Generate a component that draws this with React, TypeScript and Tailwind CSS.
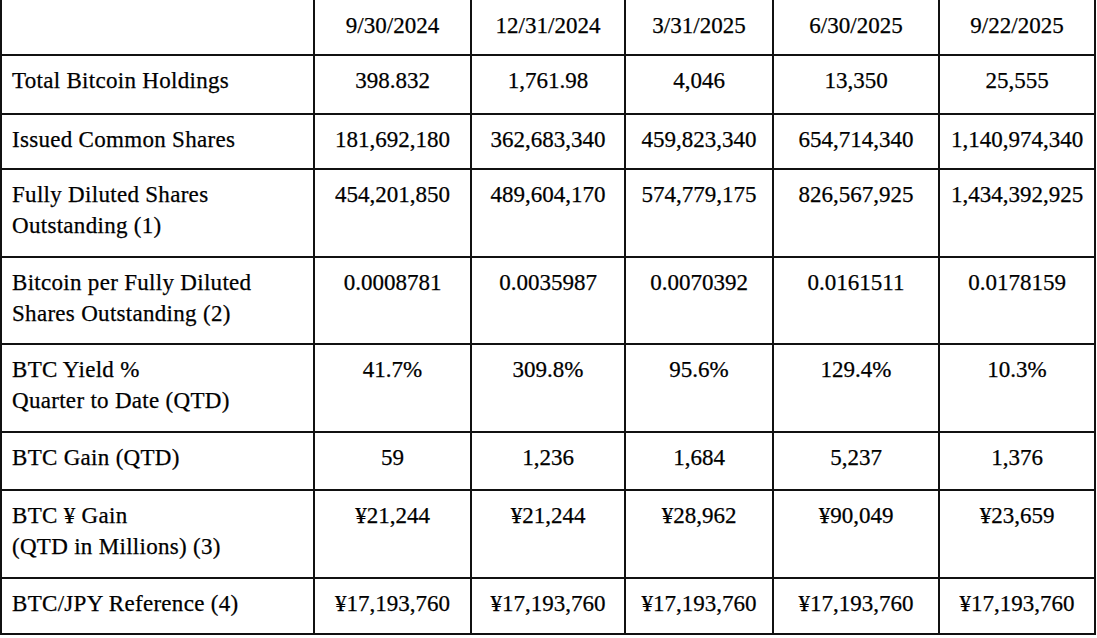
const dates = ['9/30/2024', '12/31/2024', '3/31/2025', '6/30/2025', '9/22/2025'];

const rows: { label: string[]; values: string[]; h: string }[] = [
    { label: ['Total Bitcoin Holdings'], values: ['398.832', '1,761.98', '4,046', '13,350', '25,555'], h: 'h-[59px]' },
    { label: ['Issued Common Shares'], values: ['181,692,180', '362,683,340', '459,823,340', '654,714,340', '1,140,974,340'], h: 'h-[55px]' },
    { label: ['Fully Diluted Shares', 'Outstanding (1)'], values: ['454,201,850', '489,604,170', '574,779,175', '826,567,925', '1,434,392,925'], h: 'h-[88px]' },
    { label: ['Bitcoin per Fully Diluted', 'Shares Outstanding (2)'], values: ['0.0008781', '0.0035987', '0.0070392', '0.0161511', '0.0178159'], h: 'h-[87px]' },
    { label: ['BTC Yield %', 'Quarter to Date (QTD)'], values: ['41.7%', '309.8%', '95.6%', '129.4%', '10.3%'], h: 'h-[88px]' },
    { label: ['BTC Gain (QTD)'], values: ['59', '1,236', '1,684', '5,237', '1,376'], h: 'h-[58px]' },
    { label: ['BTC ¥ Gain', '(QTD in Millions) (3)'], values: ['¥21,244', '¥21,244', '¥28,962', '¥90,049', '¥23,659'], h: 'h-[88px]' },
    { label: ['BTC/JPY Reference (4)'], values: ['¥17,193,760', '¥17,193,760', '¥17,193,760', '¥17,193,760', '¥17,193,760'], h: 'h-[56px]' },
];

export default function App() {
    return (
        <div className="min-h-screen bg-white text-black font-['Liberation_Serif','Times_New_Roman',serif] text-[23px] leading-[31px] [-webkit-text-stroke:0.25px_black]">
            <table className="table-fixed border-collapse w-[1095px]">
                <colgroup>
                    <col className="w-[313px]" />
                    <col className="w-[157px]" />
                    <col className="w-[154px]" />
                    <col className="w-[148px]" />
                    <col className="w-[166px]" />
                    <col className="w-[156px]" />
                </colgroup>
                <thead>
                    <tr>
                        <th className="h-[55px] border-2 border-t-0 border-[#111] font-normal" />
                        {dates.map((d) => (
                            <th key={d} className="h-[55px] border-2 border-t-0 border-[#111] font-normal text-center align-top pt-[10px] px-0">
                                {d}
                            </th>
                        ))}
                    </tr>
                </thead>
                <tbody>
                    {rows.map((r) => (
                        <tr key={r.label[0]}>
                            <td className={`${r.h} border-2 border-[#111] align-top pl-[10px] pr-2 pt-[9px] tracking-[0.3px]`}>
                                {r.label.map((l) => (
                                    <div key={l}>{l}</div>
                                ))}
                            </td>
                            {r.values.map((v, i) => (
                                <td key={i} className={`${r.h} border-2 border-[#111] align-top text-center pt-[9px] px-0 whitespace-nowrap`}>
                                    {v}
                                </td>
                            ))}
                        </tr>
                    ))}
                </tbody>
            </table>
        </div>
    );
}
